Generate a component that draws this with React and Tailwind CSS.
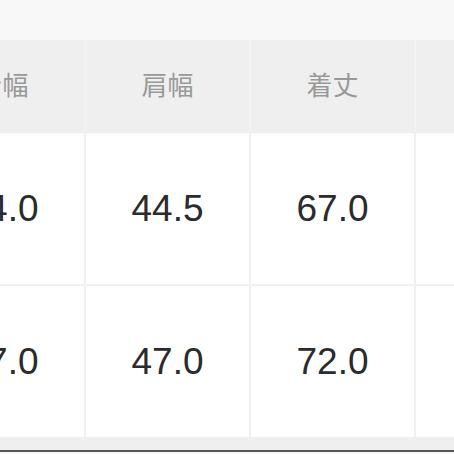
import React from 'react';

const headers = ['身幅', '肩幅', '着丈', ''];
const rows = [
    ['54.0', '44.5', '67.0', ''],
    ['57.0', '47.0', '72.0', ''],
];

const App = () => {
    return (
        <div
            className="w-[454px] h-[454px] overflow-hidden bg-[#f8f8f8] flex flex-col"
            style={{ fontFamily: '"Liberation Sans", "Noto Sans CJK JP", sans-serif' }}
        >
            <div className="h-[40px] shrink-0" />
            <div className="ml-[-79px] w-[660px] flex flex-col shrink-0">
                {/* header */}
                <div className="flex h-[93px] bg-[#efefef] border-b border-[#ececec]">
                    {headers.map((h, j) => (
                        <div
                            key={j}
                            className="w-[165px] flex items-center justify-center border-r-2 border-[#f3f3f3] text-[26px] text-[#999999]"
                        >
                            {h}
                        </div>
                    ))}
                </div>
                {rows.map((row, i) => (
                    <div key={i} className="flex h-[153px] bg-white border-b-2 border-[#f0f0f0] last:border-b-0 last:h-[151px]">
                        {row.map((v, j) => (
                            <div
                                key={j}
                                className="w-[165px] flex items-center justify-center border-r-2 border-[#f0f0f0] text-[37px] text-[#2b2b2b]"
                            >
                                {v}
                            </div>
                        ))}
                    </div>
                ))}
            </div>
            <div className="h-[13px] shrink-0 bg-[#efefef]" />
            <div className="h-[2px] shrink-0 bg-[#555555]" />
        </div>
    );
};

export default App;
